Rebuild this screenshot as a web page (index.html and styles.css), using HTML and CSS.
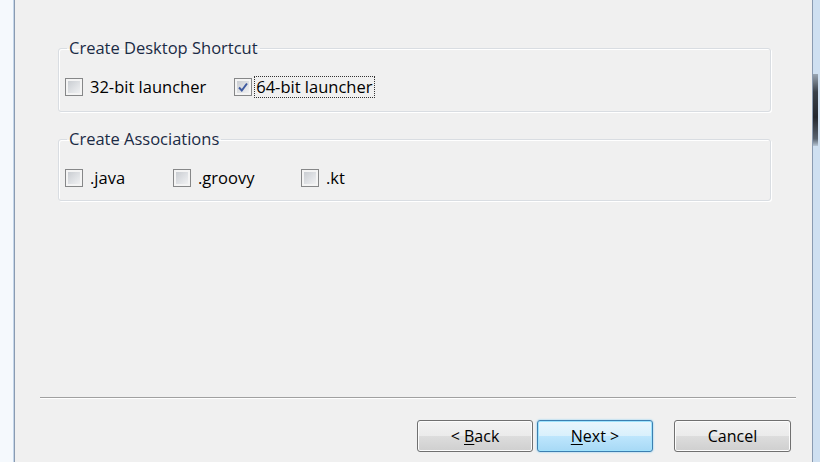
FILE: index.html
```html
<!DOCTYPE html>
<html lang="en">
<head>
    <meta charset="UTF-8">
    <meta name="viewport" content="width=device-width, initial-scale=1.0">
    <title>Setup</title>
    <link rel="stylesheet" href="styles.css">
</head>
<body>
    <div class="window">
        <div class="frame-left"></div>
        <div class="panel">
            <fieldset class="group">
                <legend>Create Desktop Shortcut</legend>
                <div class="row row-wide">
                    <label class="check">
                        <span class="box"></span>
                        <span class="text">32-bit launcher</span>
                    </label>
                    <label class="check">
                        <span class="box">
                            <svg viewBox="0 0 12 12" width="12" height="12"><path d="M2 6.5 L4.8 9.5 L10 2.5" fill="none" stroke="#3e5aa0" stroke-width="2"/></svg>
                        </span>
                        <span class="text focus">64-bit launcher</span>
                    </label>
                </div>
            </fieldset>

            <fieldset class="group group-second">
                <legend>Create Associations</legend>
                <div class="row row-assoc">
                    <label class="check">
                        <span class="box"></span>
                        <span class="text">.java</span>
                    </label>
                    <label class="check">
                        <span class="box"></span>
                        <span class="text">.groovy</span>
                    </label>
                    <label class="check">
                        <span class="box"></span>
                        <span class="text">.kt</span>
                    </label>
                </div>
            </fieldset>

            <div class="spacer"></div>
            <div class="separator"></div>

            <div class="buttons">
                <button class="btn">&lt; <u>B</u>ack</button>
                <button class="btn btn-default"><u>N</u>ext &gt;</button>
                <button class="btn btn-cancel">Cancel</button>
            </div>
        </div>
        <div class="frame-right">
            <div class="frame-shade"></div>
        </div>
    </div>
</body>
</html>
```

FILE: styles.css
```css
html, body{
    margin: 0;
    padding: 0;
    width: 820px;
    height: 462px;
    overflow: hidden;
}
body{
    font-family: "Open Sans", "Noto Sans", sans-serif;
    font-size: 16.5px;
    color: #000;
    background-color: #f0f0f0;
}
.window{
    display: flex;
    width: 820px;
    height: 462px;
}
.frame-left{
    flex: none;
    width: 13px;
    background-color: #f5f9fd;
    border-right: 1px solid #c4d6ea;
}
.frame-right{
    flex: none;
    width: 7px;
    border-left: 1px solid #8a9bb1;
    background-color: #cfe0f1;
}
.frame-shade{
    width: 5px;
    height: 72px;
    margin-top: 74px;
    background: linear-gradient(to bottom, #9aa6b3 0, #3a414a 25%, #23272e 60%, #59636f 90%, #b8c7d6 100%);
}
.panel{
    flex: 1;
    min-width: 0;
    display: flex;
    flex-direction: column;
    border-left: 1px solid #8a9bb1;
    background-color: #f0f0f0;
    padding-top: 37px;
}

/* group boxes */
.group{
    margin: 0 41px 0 43px;
    padding: 0 6px 13px 6px;
    border: 1px solid #d9dde2;
    border-radius: 3px;
    box-shadow: inset 1px 1px 0 #fff, 1px 1px 0 #fff;
    min-width: 0;
}
.group legend{
    padding: 0 2px;
    margin-left: 2px;
    line-height: 22px;
    color: #1b2b45;
}
.group-second{
    margin-top: 16px;
    padding-bottom: 11px;
}
.row{
    display: flex;
    align-items: center;
    margin-top: 17px;
    height: 22px;
}
.row-wide{
    gap: 25px;
}
.row-assoc{
    display: grid;
    grid-template-columns: 108px 128px auto;
}

/* checkboxes */
.check{
    display: flex;
    align-items: center;
    gap: 2px;
}
.box{
    flex: none;
    width: 16px;
    height: 16px;
    border: 1px solid #868788;
    background: linear-gradient(135deg, #c3c7cc 0%, #e2e4e7 60%, #f6f6f6 100%);
    box-shadow: inset 0 0 0 2px #f4f4f4;
    display: flex;
    align-items: center;
    justify-content: center;
}
.text{
    padding: 0 2px 0 4px;
    border: 1px dotted transparent;
    line-height: 20px;
}
.text.focus{
    padding-left: 1px;
    border-color: #333;
}

/* bottom */
.spacer{
    flex: 1;
}
.separator{
    margin: 0 16px 0 25px;
    border-top: 1px solid #a0a0a0;
    border-bottom: 1px solid #fff;
}
.buttons{
    display: flex;
    justify-content: flex-end;
    gap: 4px;
    padding: 21px 21px 10px 0;
}
.btn{
    width: 116px;
    height: 32px;
    font-family: "Open Sans", "Noto Sans", sans-serif;
    font-size: 16px;
    color: #000;
    border: 1px solid #707070;
    border-radius: 3px;
    box-shadow: inset 0 0 0 1px #fcfcfc;
    background: linear-gradient(to bottom, #f2f2f2 0, #ebebeb 50%, #dddddd 50%, #cfcfcf 100%);
    padding: 0;
}
.btn u{
    text-underline-offset: 2px;
}
.btn-default{
    border-color: #3c7fb1;
    box-shadow: inset 0 0 0 1px #9fe3fd, 0 0 2px #6ac4f4;
    background: linear-gradient(to bottom, #eaf6fd 0, #d9f0fc 50%, #bee6fd 50%, #a7d9f5 100%);
}
.btn-cancel{
    width: 117px;
    margin-left: 17px;
}
```
